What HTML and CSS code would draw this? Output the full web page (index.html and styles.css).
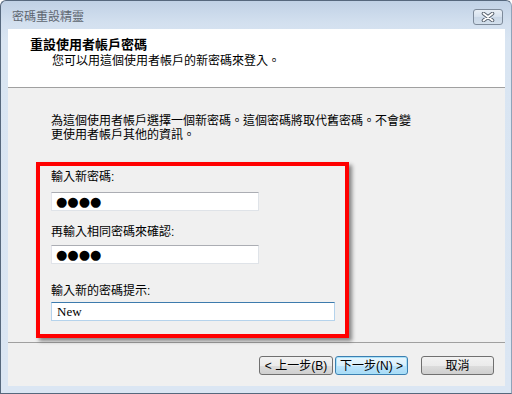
FILE: index.html
```html
<!DOCTYPE html>
<html lang="zh-Hant">
<head>
<meta charset="utf-8">
<title>密碼重設精靈</title>
<link rel="stylesheet" href="styles.css">
</head>
<body>
<div class="window">
  <div class="titlebar">
    <span class="title">密碼重設精靈</span>
    <span class="close">
      <svg width="14" height="10" viewBox="0 0 14 10">
        <path d="M2.5 1.5 L11.5 8.5 M11.5 1.5 L2.5 8.5" stroke="#56606c" stroke-width="3.6" stroke-linecap="round" fill="none"/>
        <path d="M2.5 1.5 L11.5 8.5 M11.5 1.5 L2.5 8.5" stroke="#ffffff" stroke-width="1.8" stroke-linecap="round" fill="none"/>
      </svg>
    </span>
  </div>
  <div class="client">
    <div class="header">
      <div class="header-title">重設使用者帳戶密碼</div>
      <div class="header-sub">您可以用這個使用者帳戶的新密碼來登入。</div>
    </div>
    <div class="body">
      <p class="intro">為這個使用者帳戶選擇一個新密碼。這個密碼將取代舊密碼。不會變<br>更使用者帳戶其他的資訊。</p>
      <div class="highlight">
        <div class="field-label l1">輸入新密碼:</div>
        <div class="textbox short i1"><span class="dots">●●●●</span></div>
        <div class="field-label l2">再輸入相同密碼來確認:</div>
        <div class="textbox short i2"><span class="dots">●●●●</span></div>
        <div class="field-label l3">輸入新的密碼提示:</div>
        <div class="textbox long focused i3"><span class="hint">New</span></div>
      </div>
    </div>
    <div class="footer">
      <span class="btn back">&lt; 上一步(<u>B</u>)</span>
      <span class="btn next default">下一步(<u>N</u>) &gt;</span>
      <span class="btn cancel">取消</span>
    </div>
  </div>
</div>
</body>
</html>
```
FILE: styles.css
```css
html, body {
  margin: 0;
  padding: 0;
  background: #ffffff;
}

body {
  font-family: "Liberation Sans", "Noto Sans CJK TC", sans-serif;
  font-size: 12px;
  color: #000;
}

.window {
  width: 512px;
  height: 394px;
  box-sizing: border-box;
  border: 1px solid #56687d;
  border-right-color: #8fa3b9;
  border-radius: 6px 6px 0 0;
  background: linear-gradient(#c0d1e5 0px, #d3e0ef 22px, #d9e5f2 40px, #dbe6f3 100%);
  display: flex;
  flex-direction: column;
  overflow: hidden;
}

.titlebar {
  height: 28px;
  flex: none;
  display: flex;
  align-items: flex-start;
  justify-content: space-between;
  padding: 0 8px 0 11px;
}

.title {
  margin-top: 9px;
  font-size: 12px;
  line-height: 14px;
  color: #5e6670;
}

.close {
  margin-top: 8px;
  width: 30px;
  height: 16px;
  box-sizing: border-box;
  border: 1px solid #7d8a9a;
  border-radius: 3px;
  background: linear-gradient(#e9eff6, #d6e1ee 50%, #c9d7e7 51%, #d3dfec);
  display: flex;
  align-items: center;
  justify-content: center;
}

.close svg {
  display: block;
}

.client {
  flex: 1;
  margin: 0 6px 7px 7px;
  display: flex;
  flex-direction: column;
  background: #f0f0f0;
}

.header {
  height: 59px;
  box-sizing: border-box;
  background: #ffffff;
  border-bottom: 1px solid #a0a0a0;
  padding: 8px 0 0 22px;
  flex: none;
}

.header-title {
  font-weight: bold;
  font-size: 13px;
  line-height: 15px;
}

.header-sub {
  margin: 2px 0 0 22px;
  line-height: 15px;
}

.body {
  height: 254px;
  flex: none;
  box-sizing: border-box;
  padding-top: 26px;
  background: #f0f0f0;
}

.intro {
  margin: 0 0 0 43px;
  line-height: 14px;
}

.highlight {
  margin: 20px 0 0 28px;
  width: 313px;
  height: 176px;
  box-sizing: border-box;
  border: 4px solid #ff0000;
  padding: 4px 0 0 11px;
  box-shadow: 3px 3px 4px rgba(0, 0, 0, 0.45);
  position: relative;
  z-index: 1;
}

.field-label {
  line-height: 14px;
}

.l2 { margin-top: 14px; }
.l3 { margin-top: 20px; }

.textbox {
  height: 19px;
  box-sizing: border-box;
  background: #ffffff;
  border: 1px solid #dfe3e8;
  border-top-color: #abadb3;
  border-left-color: #e2e3ea;
  display: flex;
  align-items: center;
  padding-left: 4px;
}

.i1 { margin-top: 8px; }
.i2 { margin-top: 6px; }
.i3 { margin-top: 4px; }

.short { width: 208px; }
.long { width: 284px; }

.focused {
  border-color: #b5d3ec;
  border-top-color: #3d7bad;
}

.dots {
  font-family: "DejaVu Sans", sans-serif;
  font-size: 13px;
  letter-spacing: 0;
  line-height: 14px;
}

.hint {
  font-family: "Liberation Serif", serif;
  font-size: 13px;
  line-height: 14px;
  padding-left: 1px;
}

.footer {
  flex: 1;
  border-top: 1px solid #a0a0a0;
  display: flex;
  align-items: flex-start;
  justify-content: flex-end;
  padding: 13px 11px 0 0;
}

.btn {
  height: 19px;
  box-sizing: border-box;
  border: 1px solid #707070;
  border-radius: 3px;
  background: linear-gradient(#f2f2f2, #ebebeb 50%, #dddddd 51%, #cfcfcf);
  display: flex;
  align-items: center;
  justify-content: center;
  font-size: 12px;
  line-height: 14px;
}

.btn u {
  text-decoration: none;
}

.back { width: 74px; }
.next { width: 73px; margin-left: 2px; }
.cancel { width: 73px; margin-left: 13px; }

.default {
  border-color: #3c7fb1;
  background: linear-gradient(#eaf6fd, #d9f0fc 50%, #bee6fd 51%, #a7d9f5);
  box-shadow: inset 0 0 0 1px #a9e1f8;
}
```
